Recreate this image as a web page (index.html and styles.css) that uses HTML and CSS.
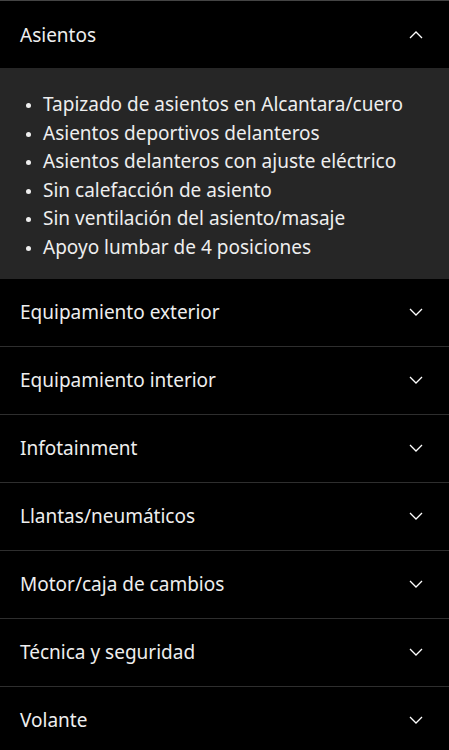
FILE: index.html
```html
<!DOCTYPE html>
<html lang="es">
<head>
<meta charset="utf-8">
<link rel="stylesheet" href="styles.css">
</head>
<body>
<div class="accordion">
  <section class="item open">
    <div class="head">
      <span class="title">Asientos</span>
      <svg class="chev" width="14" height="8" viewBox="0 0 14 8"><path d="M1 7 L7 1 L13 7" fill="none" stroke="#fff" stroke-width="1.3"/></svg>
    </div>
    <div class="panel">
      <ul class="list">
        <li>Tapizado de asientos en Alcantara/cuero</li>
        <li>Asientos deportivos delanteros</li>
        <li>Asientos delanteros con ajuste eléctrico</li>
        <li>Sin calefacción de asiento</li>
        <li>Sin ventilación del asiento/masaje</li>
        <li>Apoyo lumbar de 4 posiciones</li>
      </ul>
    </div>
  </section>
  <section class="item">
    <div class="head"><span class="title">Equipamiento exterior</span><svg class="chev" width="14" height="8" viewBox="0 0 14 8"><path d="M1 1 L7 7 L13 1" fill="none" stroke="#fff" stroke-width="1.3"/></svg></div>
  </section>
  <section class="item">
    <div class="head"><span class="title">Equipamiento interior</span><svg class="chev" width="14" height="8" viewBox="0 0 14 8"><path d="M1 1 L7 7 L13 1" fill="none" stroke="#fff" stroke-width="1.3"/></svg></div>
  </section>
  <section class="item">
    <div class="head"><span class="title">Infotainment</span><svg class="chev" width="14" height="8" viewBox="0 0 14 8"><path d="M1 1 L7 7 L13 1" fill="none" stroke="#fff" stroke-width="1.3"/></svg></div>
  </section>
  <section class="item">
    <div class="head"><span class="title">Llantas/neumáticos</span><svg class="chev" width="14" height="8" viewBox="0 0 14 8"><path d="M1 1 L7 7 L13 1" fill="none" stroke="#fff" stroke-width="1.3"/></svg></div>
  </section>
  <section class="item">
    <div class="head"><span class="title">Motor/caja de cambios</span><svg class="chev" width="14" height="8" viewBox="0 0 14 8"><path d="M1 1 L7 7 L13 1" fill="none" stroke="#fff" stroke-width="1.3"/></svg></div>
  </section>
  <section class="item">
    <div class="head"><span class="title">Técnica y seguridad</span><svg class="chev" width="14" height="8" viewBox="0 0 14 8"><path d="M1 1 L7 7 L13 1" fill="none" stroke="#fff" stroke-width="1.3"/></svg></div>
  </section>
  <section class="item">
    <div class="head"><span class="title">Volante</span><svg class="chev" width="14" height="8" viewBox="0 0 14 8"><path d="M1 1 L7 7 L13 1" fill="none" stroke="#fff" stroke-width="1.3"/></svg></div>
  </section>
</div>
</body>
</html>
```
FILE: styles.css
```css
html, body {
  margin: 0;
  padding: 0;
  background: #000;
}
body {
  font-family: "Noto Sans", "Open Sans", sans-serif;
  color: #eeeeee;
  border-top: 1px solid #444;
}
.item {
  border-top: 1px solid #2e2e2e;
}
.item:first-child,
.item.open + .item {
  border-top: none;
}
.head {
  height: 67px;
  display: flex;
  align-items: center;
  justify-content: space-between;
  padding: 0 26px 0 20px;
  font-size: 19px;
}
.chev { display: block; }
.panel {
  background: #262626;
  padding: 22px 20px 17px 20px;
}
.list {
  margin: 0;
  padding: 0 0 0 23px;
  font-size: 19px;
  line-height: 28.6px;
}
.list li::marker { font-size: 14px; }
```
